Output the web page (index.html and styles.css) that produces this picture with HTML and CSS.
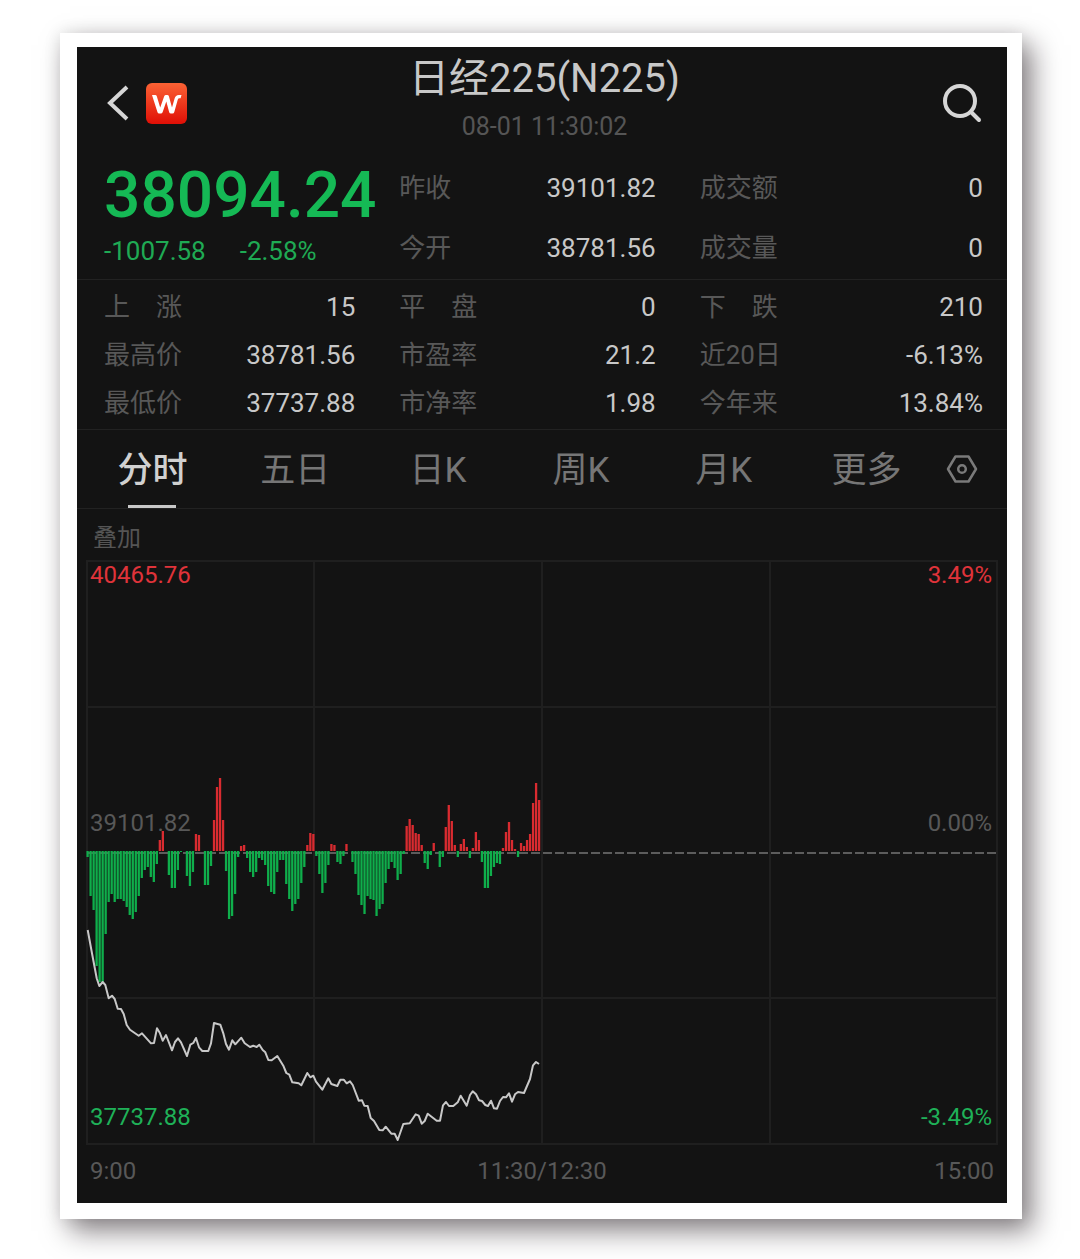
FILE: index.html
```html
<!DOCTYPE html>
<html lang="zh-CN">
<head>
    <meta charset="UTF-8">
    <meta name="viewport" content="width=device-width, initial-scale=1.0">
    <title>日经225(N225)</title>
    <link rel="stylesheet" href="styles.css">
</head>
<body>
    <div class="frame">
        <main class="screen">
            <header class="header">
                <div class="header-left">
                    <button class="icon-btn" aria-label="返回">
                        <svg width="24" height="38" viewBox="0 0 24 38" fill="none" stroke="#d6d6d6" stroke-width="4">
                            <path d="M21 3 L4 19 L21 35"/>
                        </svg>
                    </button>
                    <a class="logo" href="#" aria-label="首页">
                        <svg width="41" height="41" viewBox="0 0 41 41" fill="none">
                            <defs>
                                <linearGradient id="logoBg" x1="0" y1="0" x2="0" y2="1">
                                    <stop offset="0" stop-color="#fb6234"/>
                                    <stop offset="1" stop-color="#e00f06"/>
                                </linearGradient>
                            </defs>
                            <rect width="41" height="41" rx="6" fill="url(#logoBg)"/>
                            <path d="M6 12 H9.200 Q10.400 12 10.800 13.200 L14.200 24.500 L18.200 13.200 Q18.700 12 19.900 12 H21.300 Q22.500 12 22.900 13.200 L26 24.500 L28.600 15.500 Q29.600 12 32.800 12 H35.500 L34.600 15.200 H33.300 Q32.200 15.200 31.800 16.400 L28.300 29 Q27.900 30.500 26.500 30.500 H24.900 Q23.600 30.500 23.200 29.200 L20.300 18.500 L16.600 29.200 Q16.100 30.500 14.800 30.500 H13.200 Q11.900 30.500 11.500 29.200 Z" fill="#fff"/>
                        </svg>
                    </a>
                </div>
                <div class="header-title">
                    <h1>日经225(N225)</h1>
                    <time>08-01 11:30:02</time>
                </div>
                <button class="icon-btn search" aria-label="搜索">
                    <svg width="40" height="40" viewBox="0 0 40 40" fill="none" stroke="#d6d6d6" stroke-width="4" stroke-linecap="round">
                        <circle cx="17" cy="18" r="15"/>
                        <path d="M28 29 L36 37"/>
                    </svg>
                </button>
            </header>

            <!-- 最新价 -->
            <section class="quote">
                <div class="price">
                    <strong>38094.24</strong>
                    <div class="change"><span>-1007.58</span><span>-2.58%</span></div>
                </div>
                <dl>
                    <div><dt>昨收</dt><dd>39101.82</dd></div>
                    <div><dt>今开</dt><dd>38781.56</dd></div>
                </dl>
                <dl>
                    <div><dt>成交额</dt><dd>0</dd></div>
                    <div><dt>成交量</dt><dd>0</dd></div>
                </dl>
            </section>

            <!-- 指标 -->
            <section class="stats">
                <dl>
                    <div><dt>上　涨</dt><dd>15</dd></div>
                    <div><dt>最高价</dt><dd>38781.56</dd></div>
                    <div><dt>最低价</dt><dd>37737.88</dd></div>
                </dl>
                <dl>
                    <div><dt>平　盘</dt><dd>0</dd></div>
                    <div><dt>市盈率</dt><dd>21.2</dd></div>
                    <div><dt>市净率</dt><dd>1.98</dd></div>
                </dl>
                <dl>
                    <div><dt>下　跌</dt><dd>210</dd></div>
                    <div><dt>近20日</dt><dd>-6.13%</dd></div>
                    <div><dt>今年来</dt><dd>13.84%</dd></div>
                </dl>
            </section>

            <nav class="tabs">
                <button class="tab active">分时</button>
                <button class="tab">五日</button>
                <button class="tab">日K</button>
                <button class="tab">周K</button>
                <button class="tab">月K</button>
                <button class="tab">更多</button>
                <button class="icon-btn settings" aria-label="设置">
                    <svg width="32" height="30" viewBox="0 0 32 30" fill="none" stroke="#7a7a7a" stroke-width="2.500" stroke-linejoin="round">
                        <path d="M9.500 2.500 H22.500 L30 15 L22.500 27.500 H9.500 L2 15 Z"/>
                        <circle cx="16" cy="15" r="3.800"/>
                    </svg>
                </button>
            </nav>

            <button class="overlay-btn">叠加</button>

            <div class="chart">
                <span class="label top left up">40465.76</span>
                <span class="label top right up">3.49%</span>
                <span class="label middle left">39101.82</span>
                <span class="label middle right">0.00%</span>
                <span class="label bottom left down">37737.88</span>
                <span class="label bottom right down">-3.49%</span>
                <svg viewBox="0 0 912 585" fill="none">
                    <path class="grid" d="M1 1H911V584H1Z M1 147H911 M1 438H911 M228 0V584 M456 0V584 M684 0V584"/>
                    <path class="zero" d="M1 293H911"/>
                    <path id="upBars" class="bars-up"/>
                    <path id="downBars" class="bars-down"/>
                    <polyline class="price-line" points="1.7,370 5.7,391.7 10.7,418.3 13.3,426 16.7,422 19.3,425 22.7,438.3 26,435.7 28.7,439 31.7,448.7 35,449 37.7,454 40.7,465 44,469.7 52.7,475.7 56,473.3 65,483.3 68,483 71,468.3 74,473.3 76.7,480.7 80,475 86,490.3 89,482 92,478.3 95,482.3 101,496 104.3,484.7 107.3,483 110,478 113,487.3 116.3,491 122.3,491 125,483.3 128,463 134.3,464.7 137.3,473.3 140,484 143,489.7 146.3,480.3 149.3,484.3 155.3,477.7 158.7,483.3 164,487 167.3,485.7 170.7,487 173.3,484.7 176.7,490 179.3,492.3 182.3,500 185.7,500.3 191.3,496 197.3,505.7 200.3,513 203.3,514.7 206.3,522.3 212.7,523.3 215.3,525.3 221.3,513 224.3,517.3 227.3,515.7 230,521.7 236.3,529.7 242.3,518.3 245.3,524 251.3,526 254.3,519.7 257.7,519.7 260.7,523.3 264,521.3 266.7,525 272.7,540.7 276,540.3 278.3,545.7 281.7,546 284.7,558 288,561 293.3,570 296.7,570.3 299.7,566.7 305.3,573.7 308.7,573.7 311.7,580 317.3,564 323.7,563.3 329.7,554.3 332.7,555.7 335.7,563.7 338.7,561 341.7,553.7 350.7,560.7 354,560.7 357,545.3 360,542 363,546 367.3,546 371.7,542.3 374.7,535.7 380.7,545.7 384,535 386.7,531.3 390,534.3 393,540.3 396,541 399.3,545 402,546 405,540.7 408,548.3 411,548.7 414,541 417,537 420,537.3 423,533.3 426,541.7 429,534.3 432,532 438,533 441,526 444,519 447,505.3 450,502 453,504"/>
                </svg>
            </div>
            <div class="axis">
                <span>9:00</span>
                <span>11:30/12:30</span>
                <span>15:00</span>
            </div>
        </main>
    </div>

    <script src="chart.js"></script>
</body>
</html>
```

FILE: styles.css
```css
* {
    margin: 0;
    padding: 0;
    box-sizing: border-box;
}

body {
    background: #fff;
    padding: 33px 58px 40px 60px;
    font-family: Roboto, "Noto Sans CJK SC", sans-serif;
    font-size: 26px;
    color: #c8c8c8;
}

button {
    border: none;
    background: none;
    font-family: inherit;
    cursor: pointer;
}

svg {
    display: block;
}

/* 白色边框 */
.frame {
    background: #fff;
    padding: 14px 15px 16px 17px;
    box-shadow: 10px 12px 26px rgba(20, 10, 15, 0.5), 0 0 16px rgba(0, 0, 0, 0.1);
}
.screen {
    background: #131313;
}

/* 标题区 */
.header {
    display: grid;
    grid-template-columns: 1fr auto 1fr;
    align-items: center;
    padding: 8px 24px 6px 29px;
}
.header-left {
    display: flex;
    align-items: center;
    gap: 16px;
}
.header-title {
    text-align: center;
    line-height: 48px;
}
.header-title h1 {
    font-size: 40px;
    font-weight: 400;
}
.header-title time {
    display: block;
    font-size: 25px;
    color: #555;
}
.search {
    justify-self: end;
}

/* 行情数据 */
.quote,
.stats {
    display: grid;
    grid-template-columns: 251fr 256fr 283fr;
    gap: 44px;
    padding: 1px 24px 1px 27px;
    border-bottom: 1px solid #222;
}
.stats {
    padding-top: 3px;
    padding-bottom: 2px;
}
.price {
    min-width: 0;
    white-space: nowrap;
    color: #15b955;
}
.price strong {
    display: block;
    font-size: 64px;
    font-weight: 500;
    line-height: 76px;
}
.change {
    display: flex;
    gap: 34px;
    line-height: 34px;
    color: #1faa54;
}
dl div {
    display: flex;
    justify-content: space-between;
    line-height: 48px;
}
.quote dl div {
    line-height: 60px;
}
dt {
    color: #585858;
}

/* 周期切换 */
.tabs {
    display: flex;
    padding: 0 21px 0 4px;
    border-bottom: 1px solid #222;
}
.tab {
    position: relative;
    flex: 1;
    padding-top: 4px;
    font-size: 35px;
    line-height: 74px;
    color: #767676;
}
.tab.active {
    font-weight: 500;
    color: #d0d0d0;
}
.tab.active::after {
    content: "";
    position: absolute;
    left: 50%;
    bottom: 0;
    width: 48px;
    height: 3px;
    margin-left: -24px;
    background: #c8c8c8;
}
.settings {
    width: 48px;
    display: grid;
    place-items: center;
}

.overlay-btn {
    display: block;
    padding: 7px 16px 0;
    font-size: 24px;
    line-height: 44px;
    color: #555;
}

/* 分时图 */
.chart {
    position: relative;
    margin: 0 9px;
}
.chart svg {
    width: 100%;
    height: auto;
}
.grid {
    stroke: #1f1f1f;
    stroke-width: 2;
}
.zero {
    stroke: #5c5c5c;
    stroke-width: 2;
    stroke-dasharray: 9 3;
}
.bars-up {
    stroke: #d92b30;
    stroke-width: 2.3;
}
.bars-down {
    stroke: #0fae4b;
    stroke-width: 2.3;
}
.price-line {
    stroke: #c8c8c8;
    stroke-width: 2;
    stroke-linejoin: round;
}
.label {
    position: absolute;
    font-size: 24px;
    line-height: 30px;
    color: #585858;
}
.left {
    left: 4px;
}
.right {
    right: 6px;
}
.top {
    top: 0;
}
.middle {
    bottom: calc(50% + 15px);
}
.bottom {
    bottom: 13px;
}
.up {
    color: #e0333a;
}
.down {
    color: #1fb158;
}
.axis {
    display: grid;
    grid-template-columns: 1fr auto 1fr;
    padding: 0 13px 6px;
    font-size: 24px;
    line-height: 52px;
    color: #585858;
}
.axis span:last-child {
    text-align: right;
}
```

FILE: chart.js
```js
// 每分钟一根，负值向上（红），正值向下（绿）
const bars = [
    6, 45, 59, 115, 131, 131, 83, 51, 43, 51, 48, 48, 50, 56, 64, 68, 61, 45, 27, 19,
    16, 26, 31, 13, -11, -20, 0, 24, 37, 37, 19, 1, 0, 25, 35, 21, -17, -16, 0, 34,
    34, 15, -31, -64, -73, -31, 20, 68, 65, 43, 6, -5, -6, 7, 21, 26, 21, 7, 9, 14,
    35, 41, 43, 21, 9, 9, 33, 48, 60, 53, 48, 32, 16, -6, -18, -17, 5, 23, 42, 32,
    14, -7, -6, 11, 13, 5, -7, 0, 11, 23, 44, 54, 63, 45, 48, 49, 65, 58, 53, 32,
    18, 11, 17, 29, 23, 3, -25, -32, -26, -18, -17, -6, 12, 18, 4, -8, 0, 16, 6, -24,
    -46, -30, -6, 6, -7, -12, -4, 7, -3, -19, -11, 11, 37, 37, 25, 16, 12, 13, -3, -19,
    -29, -11, -2, 6, -8, -5, -11, -17, -48, -68, -51
];
const zeroY = 291;
const step = 3.01;

let up = '';
let down = '';
bars.forEach((v, i) => {
    const x = (1.6 + i * step).toFixed(2);
    if (v < 0) up += `M${x} ${zeroY}v${v}`;
    if (v > 0) down += `M${x} ${zeroY}v${v}`;
});
document.getElementById('upBars').setAttribute('d', up);
document.getElementById('downBars').setAttribute('d', down);
```
